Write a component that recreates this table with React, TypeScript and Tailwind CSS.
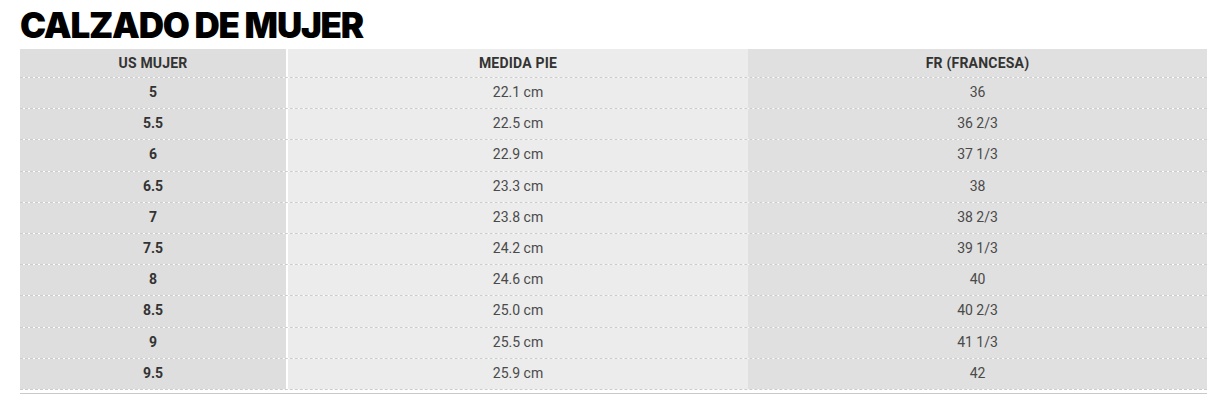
const rows = [
  ['5', '22.1 cm', '36'],
  ['5.5', '22.5 cm', '36 2/3'],
  ['6', '22.9 cm', '37 1/3'],
  ['6.5', '23.3 cm', '38'],
  ['7', '23.8 cm', '38 2/3'],
  ['7.5', '24.2 cm', '39 1/3'],
  ['8', '24.6 cm', '40'],
  ['8.5', '25.0 cm', '40 2/3'],
  ['9', '25.5 cm', '41 1/3'],
  ['9.5', '25.9 cm', '42'],
]

export default function App() {
  return (
    <div className="min-h-screen bg-white px-5 pt-[5px] font-['Roboto',sans-serif]">
      <h1 className="font-['Inter',sans-serif] text-[35px] font-black leading-[40px] tracking-[-1.2px] text-black">
        CALZADO DE MUJER
      </h1>
      <div className="mt-[4px] w-[1187px]">
        <div className="flex h-[29px] border-b border-dashed border-[#cdcdcd] text-[14px] font-bold tracking-[0.2px] text-[#333]">
          <div className="flex w-[266px] items-center justify-center bg-[#dedede]">US MUJER</div>
          <div className="w-[2px] bg-white" />
          <div className="flex w-[460px] items-center justify-center bg-[#ececec]">MEDIDA PIE</div>
          <div className="flex flex-1 items-center justify-center bg-[#e0e0e0]">FR (FRANCESA)</div>
        </div>
        {rows.map(([us, cm, fr]) => (
          <div key={us} className="flex h-[31.2px] border-b border-dashed border-[#cdcdcd] text-[14px] text-[#4a4a4a]">
            <div className="flex w-[266px] items-center justify-center bg-[#dedede] pb-px font-bold text-[#333]">{us}</div>
            <div className="w-[2px] bg-white" />
            <div className="flex w-[460px] items-center justify-center bg-[#ececec] pb-px">{cm}</div>
            <div className="flex flex-1 items-center justify-center bg-[#e0e0e0] pb-px">{fr}</div>
          </div>
        ))}
        <div className="mt-[3px] h-px bg-[#c9c9c9]" />
      </div>
    </div>
  )
}
